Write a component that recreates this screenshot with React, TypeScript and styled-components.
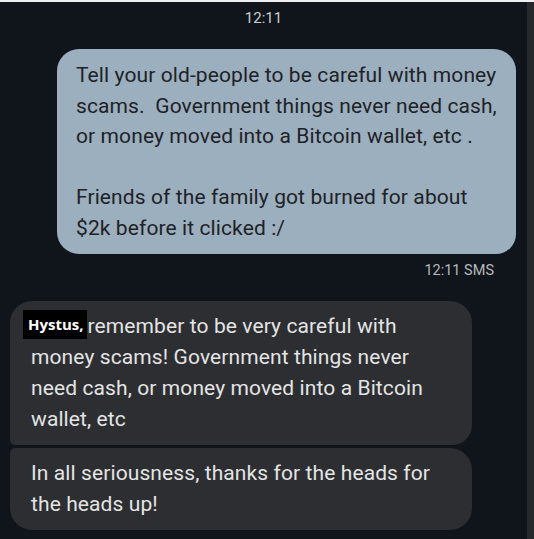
import React from "react";
import styled, { createGlobalStyle } from "styled-components";

const Global = createGlobalStyle`
  html, body {
    margin: 0;
    padding: 0;
    background: #0f151a;
  }
  * { box-sizing: border-box; }
`;

const Screen = styled.div`
  width: 534px;
  height: 539px;
  display: flex;
  flex-direction: column;
  background: #0f151a;
  overflow: hidden;
  font-family: Roboto, "Noto Sans", sans-serif;
`;

const TopEdge = styled.div`
  height: 2px;
  background: #eef0f1;
`;

const Body = styled.div`
  flex: 1;
  display: flex;
`;

const Thread = styled.div`
  flex: 1;
  display: flex;
  flex-direction: column;
`;

const ScrollStrip = styled.div`
  width: 7px;
  background: #26292c;
`;

const DayTime = styled.div`
  text-align: center;
  color: #c9cdd1;
  font-size: 15px;
  line-height: 20px;
  padding-top: 6px;
  height: 47px;
`;

const OutgoingGroup = styled.div`
  display: flex;
  flex-direction: column;
  align-items: flex-end;
  padding-right: 11px;
`;

const Bubble = styled.div<{ $out?: boolean; $corners: string }>`
  background: ${(p) => (p.$out ? "#9cafbe" : "#2c2e31")};
  color: ${(p) => (p.$out ? "#1e2227" : "#e4e4e4")};
  border-radius: ${(p) => p.$corners};
  font-size: 21px;
  letter-spacing: 0.1px;
  line-height: 30.5px;
  white-space: nowrap;
`;

const OutBubble = styled(Bubble)`
  width: 459px;
  padding: 11px 16px 11px 19px;
`;

const InBubble = styled(Bubble)`
  width: 462px;
  padding: 10px 16px 10px 21px;
  line-height: 31px;
`;

const Meta = styled.div`
  color: #b6babe;
  font-size: 14.5px;
  line-height: 20px;
  padding: 7px 22px 0 0;
  height: 47px;
`;

const IncomingGroup = styled.div`
  display: flex;
  flex-direction: column;
  align-items: flex-start;
  gap: 3px;
  padding-left: 10px;
`;

const NameTag = styled.span`
  display: inline-block;
  background: #000;
  color: #fff;
  font-family: "Open Sans", "Noto Sans", sans-serif;
  font-weight: 700;
  font-size: 15px;
  letter-spacing: 0;
  line-height: 29px;
  height: 29px;
  padding: 0 3px 0 5px;
  margin-left: -8px;
  margin-right: 1px;
  vertical-align: top;
  margin-top: -1px;
`;

export default function App() {
  return (
    <>
      <Global />
      <Screen>
        <TopEdge />
        <Body>
          <Thread>
            <DayTime>12:11</DayTime>
            <OutgoingGroup>
              <OutBubble $out $corners="22px 22px 20px 22px">
                Tell your old-people to be careful with money
                <br />
                scams.&nbsp; Government things never need cash,
                <br />
                or money moved into a Bitcoin wallet, etc .
                <br />
                <br />
                Friends of the family got burned for about
                <br />
                $2k before it clicked :/
              </OutBubble>
              <Meta>12:11 SMS</Meta>
            </OutgoingGroup>
            <IncomingGroup>
              <InBubble $corners="22px 22px 20px 5px">
                <NameTag>Hystus,</NameTag>remember to be very careful with
                <br />
                money scams! Government things never
                <br />
                need cash, or money moved into a Bitcoin
                <br />
                wallet, etc
              </InBubble>
              <InBubble $corners="5px 22px 22px 22px">
                In all seriousness, thanks for the heads for
                <br />
                the heads up!
              </InBubble>
            </IncomingGroup>
          </Thread>
          <ScrollStrip />
        </Body>
      </Screen>
    </>
  );
}
